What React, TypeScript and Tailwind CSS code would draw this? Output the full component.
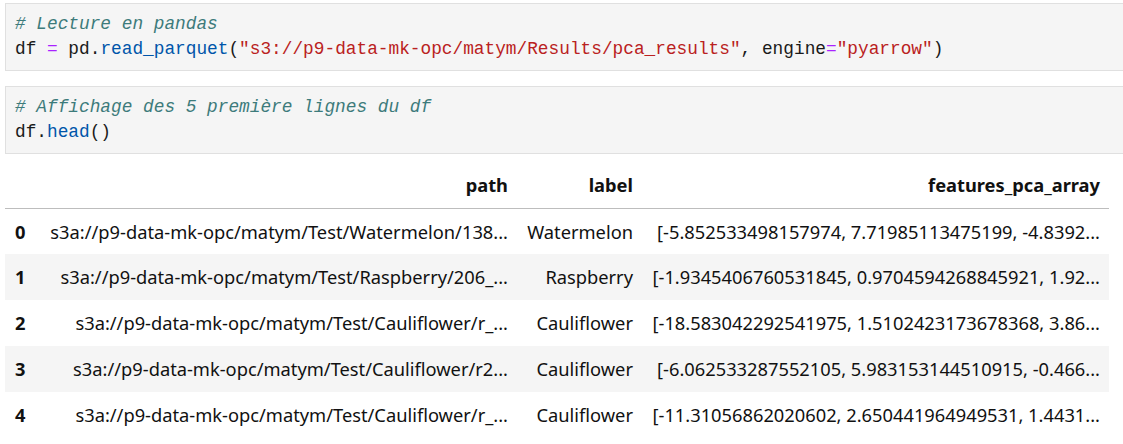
const rows = [
  {
    i: '0',
    path: 's3a://p9-data-mk-opc/matym/Test/Watermelon/138...',
    label: 'Watermelon',
    feat: '[-5.852533498157974, 7.71985113475199, -4.8392...',
  },
  {
    i: '1',
    path: 's3a://p9-data-mk-opc/matym/Test/Raspberry/206_...',
    label: 'Raspberry',
    feat: '[-1.9345406760531845, 0.9704594268845921, 1.92...',
  },
  {
    i: '2',
    path: 's3a://p9-data-mk-opc/matym/Test/Cauliflower/r_...',
    label: 'Cauliflower',
    feat: '[-18.583042292541975, 1.5102423173678368, 3.86...',
  },
  {
    i: '3',
    path: 's3a://p9-data-mk-opc/matym/Test/Cauliflower/r2...',
    label: 'Cauliflower',
    feat: '[-6.062533287552105, 5.983153144510915, -0.466...',
  },
  {
    i: '4',
    path: 's3a://p9-data-mk-opc/matym/Test/Cauliflower/r_...',
    label: 'Cauliflower',
    feat: '[-11.31056862020602, 2.650441964949531, 1.4431...',
  },
];

const mono = "font-['Liberation_Mono','DejaVu_Sans_Mono',monospace] text-[17.8px] leading-[25px]";

function CodeCell({ children }: { children: React.ReactNode }) {
  return (
    <div className={`ml-[5px] border border-r-0 border-[#e0e0e0] bg-[#f5f5f5] pl-[9px] pt-[8px] pb-[8px] text-[#1a1a1a] whitespace-pre ${mono}`}>
      {children}
    </div>
  );
}

const Comment = ({ children }: { children: React.ReactNode }) => (
  <span className="italic text-[#3d7b7b]">{children}</span>
);
const Str = ({ children }: { children: React.ReactNode }) => <span className="text-[#ba2121]">{children}</span>;
const Op = ({ children }: { children: React.ReactNode }) => <span className="text-[#aa22ff]">{children}</span>;
const Fn = ({ children }: { children: React.ReactNode }) => <span className="text-[#0055aa]">{children}</span>;

export default function App() {
  return (
    <div className="w-[1123px] h-[444px] bg-white overflow-hidden pt-[3px]">
      <CodeCell>
        <div><Comment># Lecture en pandas</Comment></div>
        <div>
          df <Op>=</Op> pd.<Fn>read_parquet</Fn>(<Str>"s3://p9-data-mk-opc/matym/Results/pca_results"</Str>, engine<Op>=</Op><Str>"pyarrow"</Str>)
        </div>
      </CodeCell>

      <div className="h-[15px]" />

      <CodeCell>
        <div><Comment># Affichage des 5 première lignes du df</Comment></div>
        <div>
          df.<Fn>head</Fn>()
        </div>
      </CodeCell>

      <table className="ml-[5px] mt-[8px] w-[1104px] table-fixed border-collapse font-['Noto_Sans','Open_Sans',sans-serif] text-[18.3px] text-[#111]">
        <colgroup>
          <col className="w-[30px]" />
          <col className="w-[482px]" />
          <col className="w-[125px]" />
          <col className="w-[467px]" />
        </colgroup>
        <thead>
          <tr className="h-[46px] border-b border-[#bdbdbd]">
            <th />
            <th className="text-right font-bold pr-[9px]">path</th>
            <th className="text-right font-bold pr-[9px]">label</th>
            <th className="text-right font-bold pr-[9px]">features_pca_array</th>
          </tr>
        </thead>
        <tbody>
          {rows.map((r, k) => (
            <tr key={r.i} className={`h-[46px] ${k % 2 === 1 ? 'bg-[#f5f5f5]' : ''}`}>
              <td className="text-left font-bold pl-[10px]">{r.i}</td>
              <td className="text-right pr-[9px] whitespace-nowrap overflow-hidden">{r.path}</td>
              <td className="text-right pr-[9px] whitespace-nowrap overflow-hidden">{r.label}</td>
              <td className="text-right pr-[9px] whitespace-nowrap overflow-hidden">{r.feat}</td>
            </tr>
          ))}
        </tbody>
      </table>
    </div>
  );
}
